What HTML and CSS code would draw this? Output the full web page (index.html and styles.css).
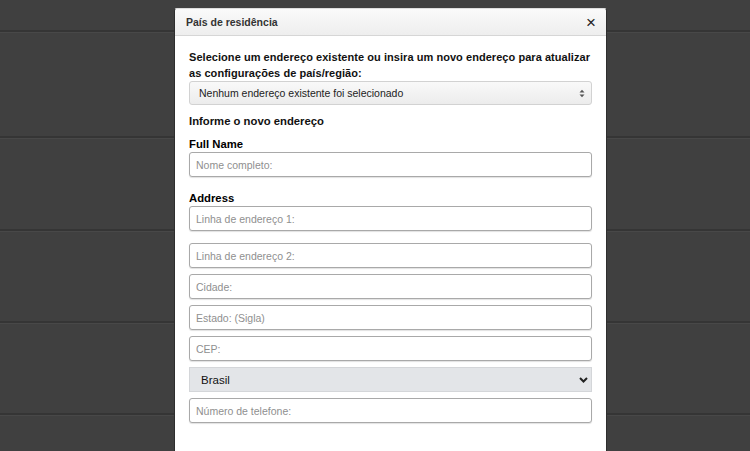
FILE: index.html
```html
<!DOCTYPE html>
<html lang="pt">
<head>
<meta charset="utf-8">
<link rel="stylesheet" href="styles.css">
</head>
<body>
<div class="backdrop">
  <div class="row r1"></div>
  <div class="row r2"></div>
  <div class="row r3"></div>
  <div class="row r4"></div>
  <div class="row r5"></div>
</div>
<div class="modal">
  <div class="modal-header">
    <span class="title">País de residência</span>
    <span class="close">×</span>
  </div>
  <div class="modal-body">
    <p class="lead">Selecione um endereço existente ou insira um novo endereço para atualizar as configurações de país/região:</p>
    <div class="fake-select">
      <span>Nenhum endereço existente foi selecionado</span>
      <svg class="updown" width="6" height="9" viewBox="0 0 6 9"><path d="M0.5 3.5 L3 0.8 L5.5 3.5Z M0.5 5.5 L3 8.2 L5.5 5.5Z" fill="#555"/></svg>
    </div>
    <h4 class="section">Informe o novo endereço</h4>
    <label class="lbl">Full Name</label>
    <input class="field" placeholder="Nome completo:">
    <label class="lbl lbl-addr">Address</label>
    <input class="field" placeholder="Linha de endereço 1:">
    <input class="field gap-big" placeholder="Linha de endereço 2:">
    <input class="field" placeholder="Cidade:">
    <input class="field" placeholder="Estado: (Sigla)">
    <input class="field" placeholder="CEP:">
    <div class="country">
      <span>Brasil</span>
      <svg width="9" height="6" viewBox="0 0 9 6"><path d="M1 1 L4.5 4.5 L8 1" fill="none" stroke="#222" stroke-width="2"/></svg>
    </div>
    <input class="field" placeholder="Número de telefone:">
  </div>
</div>
</body>
</html>
```
FILE: styles.css
```css
* { box-sizing: border-box; }
html, body { margin: 0; padding: 0; }
body {
  width: 750px;
  height: 451px;
  overflow: hidden;
  background: #404040;
  font-family: "Liberation Sans", Arial, sans-serif;
  position: relative;
}
.backdrop { display: flex; flex-direction: column; }
.row { border-bottom: 2px solid #353535; box-shadow: 0 1px 0 #484848; }
.r1 { height: 32px; }
.r2 { height: 106px; }
.r3 { height: 93px; }
.r4 { height: 92px; }
.r5 { height: 92px; }

.modal {
  position: absolute;
  left: 174px;
  top: 8px;
  width: 433px;
  height: 460px;
  background: #fff;
  border: 1px solid #2e2e2e;
  border-top-color: #ddd;
  border-radius: 3px 3px 0 0;
}
.modal-header {
  height: 27px;
  background: linear-gradient(#fafafa, #eeeeee);
  border-bottom: 1px solid #d6d6d6;
  display: flex;
  align-items: center;
  justify-content: space-between;
  padding: 0 10px 0 11px;
  border-radius: 3px 3px 0 0;
}
.title { font-size: 10.5px; font-weight: bold; color: #333; }
.close { font-size: 17px; color: #222; line-height: 1; }
.modal-body { padding: 13px 14px 0 14px; }
.lead {
  margin: 0;
  font-size: 11px;
  font-weight: bold;
  line-height: 16px;
  color: #111;
  letter-spacing: 0.05px;
}
.fake-select {
  margin-top: 0;
  height: 24px;
  border: 1px solid #d2d2d2;
  border-radius: 3px;
  background: linear-gradient(#f9f9f9, #ececec);
  display: flex;
  align-items: center;
  justify-content: space-between;
  padding: 0 6px 0 9px;
  font-size: 10.5px;
  color: #222;
}
.section { margin: 8px 0 0 0; font-size: 11.3px; font-weight: bold; color: #111; line-height: 16px; }
.lbl { display: block; margin-top: 7px; font-size: 11.3px; font-weight: bold; color: #000; line-height: 16px; }
.lbl-addr { margin-top: 13px; }
.field {
  display: block;
  width: 100%;
  height: 25px;
  margin-top: 0;
  margin-bottom: 6px;
  border: 1px solid #a9a9a9;
  border-radius: 3px;
  box-shadow: 0 1px 1px rgba(0,0,0,0.12);
  padding: 0 6px;
  font-family: "Liberation Sans", Arial, sans-serif;
  font-size: 10.5px;
  color: #333;
  background: #fff;
}
.field::placeholder { color: #8f8f8f; }
.lbl + .field { margin-top: 0; }
.gap-big { margin-top: 12px; }
.country {
  height: 25px;
  margin-bottom: 6px;
  background: #e3e5e8;
  border: 1px solid #d4d6d9;
  display: flex;
  align-items: center;
  justify-content: space-between;
  padding: 0 3px 0 11px;
  font-size: 11.5px;
  color: #111;
}
```
